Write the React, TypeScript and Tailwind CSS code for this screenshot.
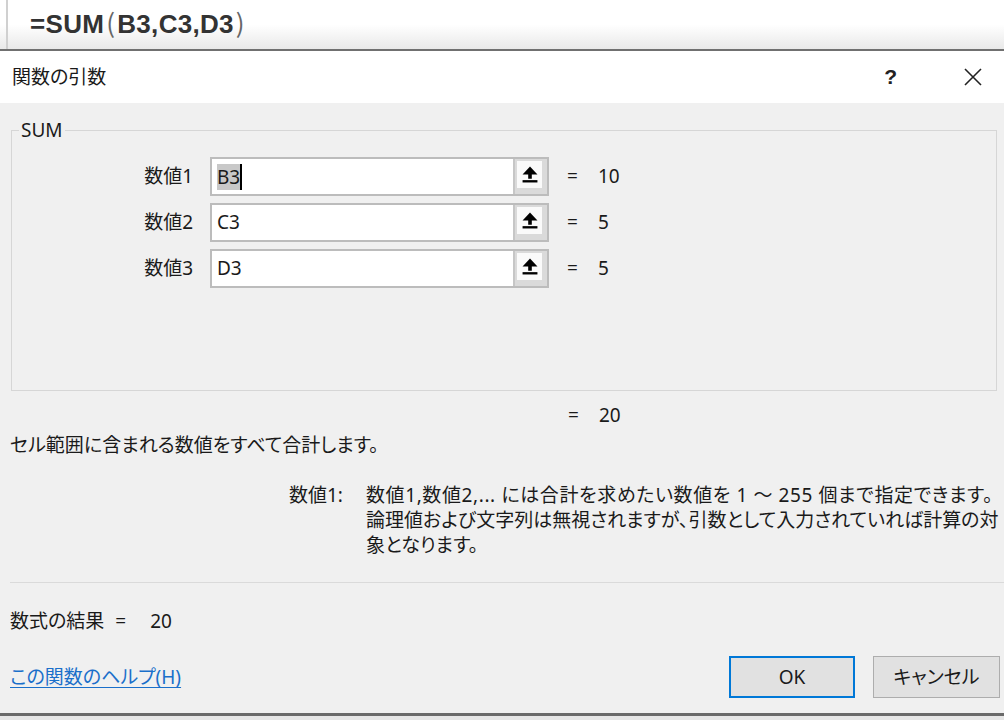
import React from "react";

const UploadIcon = () => (
  <svg width="16" height="17" viewBox="0 0 15 16">
    <path d="M7.5 0.5 L14.5 8 L0.5 8 Z" fill="#000" />
    <rect x="5.8" y="7.5" width="3.4" height="4.5" fill="#000" />
    <rect x="0.5" y="13.3" width="14" height="2.2" fill="#000" />
  </svg>
);

function ArgRow({
  label,
  value,
  result,
  selected,
}: {
  label: string;
  value: string;
  result: string;
  selected?: boolean;
}) {
  return (
    <div className="flex items-center h-[39px]">
      <div className="w-[181px] text-right">{label}</div>
      <div className="ml-[17px] flex h-full w-[339px] border-2 border-[#bcbcbc] bg-white">
        <div className="flex-1 flex items-center pl-[5px]">
          {selected ? (
            <>
              <span className="bg-[#c8c8c8] leading-[26px]">{value}</span>
              <span className="w-[2px] h-[26px] bg-black" />
            </>
          ) : (
            value
          )}
        </div>
        <div className="w-[34px] border-l-2 border-[#c6c6c6] bg-[#dadada] pt-[2px] pl-[2px] pr-[5px] pb-[6px]">
          <div className="h-full w-full bg-[#fafafa] flex items-center justify-center">
            <UploadIcon />
          </div>
        </div>
      </div>
      <div className="ml-[17px] w-[32px] pl-[1px]">=</div>
      <div>{result}</div>
    </div>
  );
}

export default function App() {
  return (
    <div className="w-[1004px] h-[720px] overflow-hidden flex flex-col bg-[#f0f0f0] text-[#1a1a1a] font-['Noto_Sans','Noto_Sans_CJK_JP',sans-serif] [font-feature-settings:'palt']">
      {/* formula bar */}
      <div className="h-[49px] shrink-0 bg-gradient-to-b from-white via-white to-[#e9e9e9] pl-[6px]">
        <div className="h-full border-l-2 border-[#d0d0d0] flex items-center pl-[22px] pb-[4px]">
          <span className="font-['Liberation_Sans',sans-serif] font-bold text-[26px] text-[#333] tracking-[0.3px]">
            =SUM
            <span className="font-normal text-[#666] font-['Noto_Sans_CJK_JP',sans-serif] mx-[2px]">(</span>
            B3,C3,D3
            <span className="font-normal text-[#666] font-['Noto_Sans_CJK_JP',sans-serif] ml-[2px]">)</span>
          </span>
        </div>
      </div>
      <div className="h-[2px] shrink-0 bg-[#707070]" />
      {/* title bar */}
      <div className="h-[52px] shrink-0 bg-white flex items-center pl-[12px] text-[19px]">
        <span>関数の引数</span>
        <span className="ml-auto text-[21px] font-semibold text-[#222] mr-[67px] font-['Liberation_Sans',sans-serif]">?</span>
        <svg width="18" height="18" viewBox="0 0 18 18" className="mr-[22px]">
          <path d="M1 1 L17 17 M17 1 L1 17" stroke="#222" strokeWidth="1.6" />
        </svg>
      </div>
      {/* body */}
      <div className="h-[610px] shrink-0 flex flex-col text-[19px]">
        <fieldset className="mt-[17px] ml-[11px] mr-[7px] h-[271px] border border-[#d6d6d6]">
          <legend className="ml-[7px] px-[2px] leading-[20px]">SUM</legend>
          <div className="pt-[17px] flex flex-col gap-[7px]">
            <ArgRow label="数値1" value="B3" result="10" selected />
            <ArgRow label="数値2" value="C3" result="5" />
            <ArgRow label="数値3" value="D3" result="5" />
          </div>
        </fieldset>

        <div className="mt-[12px] flex leading-[24px]">
          <div className="ml-[567px] w-[32px] pl-[1px]">=</div>
          <div>20</div>
        </div>

        <div className="mt-[6px] pl-[10px] leading-[24px]">
          セル範囲に含まれる数値をすべて合計します。
        </div>

        <div className="mt-[26px] flex leading-[25px]">
          <div className="ml-[289px] w-[77px] shrink-0">数値1:</div>
          <div className="flex-1 whitespace-nowrap overflow-hidden">
            <div className="tracking-[0.6px]">数値1,数値2,... には合計を求めたい数値を 1 ～ 255 個まで指定できます。</div>
            <div>論理値および文字列は無視されますが、引数として入力されていれば計算の対</div>
            <div>象となります。</div>
          </div>
        </div>

        <div className="mt-[24px] ml-[10px] border-t border-[#dadada]" />

        <div className="mt-[26px] pl-[10px] leading-[24px] flex">
          <span>数式の結果</span>
          <span className="ml-[11px]">=</span>
          <span className="ml-[24px]">20</span>
        </div>

        <div className="mt-[23px] flex items-center pl-[10px]">
          <a className="text-[#1a6fca] underline underline-offset-[3px] decoration-1">この関数のヘルプ(H)</a>
          <div className="ml-auto mr-[4px] flex gap-[18px]">
            <button className="w-[126px] h-[42px] border-2 border-[#0078d7] bg-[#e1e1e1] text-[19px]">OK</button>
            <button className="w-[127px] h-[42px] border border-[#adadad] bg-[#e1e1e1] text-[19px]">キャンセル</button>
          </div>
        </div>
      </div>
      <div className="h-[3px] shrink-0 bg-[#6a6a6a]" />
      <div className="flex-1 bg-[#e6e6e6]" />
    </div>
  );
}
